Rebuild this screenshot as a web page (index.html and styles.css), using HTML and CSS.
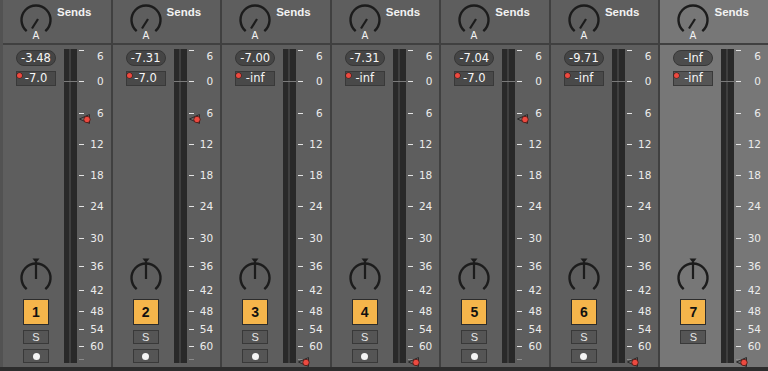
FILE: index.html
```html
<!DOCTYPE html>
<html lang="en">
<head>
    <meta charset="utf-8" />
    <title>Mixer</title>
    <link rel="stylesheet" href="styles.css">
</head>
<body>

    <svg class="defs" aria-hidden="true">
        <symbol id="send" viewBox="0 0 34 38">
            <path d="M7.7 28.1 A14.5 14.5 0 1 1 26.3 28.1" fill="none" stroke="#1c1c1c" stroke-width="2.4" />
            <line x1="19" y1="16" x2="13" y2="25.5" stroke="#1c1c1c" stroke-width="2.2" />
        </symbol>
        <symbol id="pan" viewBox="0 0 34 36">
            <polygon points="13.5,0.5 20.5,0.5 17,5" fill="#1c1c1c" />
            <path d="M7.7 31.1 A14.5 14.5 0 1 1 26.3 31.1" fill="none" stroke="#1c1c1c" stroke-width="2.4" />
            <line x1="17" y1="4" x2="17" y2="21" stroke="#1c1c1c" stroke-width="2.2" />
        </symbol>
        <symbol id="fader" viewBox="0 0 12 10">
            <polygon points="0.5,5 10.5,0.5 10.5,9.5" fill="#6e6e6e" stroke="#2a2a2a" stroke-width="1" />
            <circle cx="8" cy="5.5" r="3.2" fill="#ec4a40" stroke="#4a1410" stroke-width="0.8" />
        </symbol>
    </svg>

    <div class="mixer">

        <div class="strip">
            <div class="head">
                <svg class="knob" viewBox="0 0 34 38"><use href="#send" /><text x="17" y="35.5">A</text></svg>
                <span class="sends">Sends</span>
            </div>
            <div class="body">
                <div class="controls">
                    <div class="pill">-3.48</div>
                    <div class="vol"><span class="dot"></span>-7.0</div>
                    <svg class="pan" viewBox="0 0 34 36"><use href="#pan" /></svg>
                    <div class="num">1</div>
                    <div class="btn">S</div>
                    <div class="btn"><span class="mon"></span></div>
                </div>
                <div class="meter"><span class="bar"></span><span class="bar wide"></span><span class="zero"></span></div>
                <div class="scale">
                    <span class="mark top"><i></i>6</span>
                    <span class="mark d0"><i></i>0</span>
                    <span class="mark d6"><i></i>6</span>
                    <span class="mark d12"><i></i>12</span>
                    <span class="mark d18"><i></i>18</span>
                    <span class="mark d24"><i></i>24</span>
                    <span class="mark d30"><i></i>30</span>
                    <span class="mark d36"><i></i>36</span>
                    <span class="mark d42"><i></i>42</span>
                    <span class="mark d48"><i></i>48</span>
                    <span class="mark d54"><i></i>54</span>
                    <span class="mark d60"><i></i>60</span>
                    <span class="mark end"><i></i></span>
                    <svg class="fader at7" viewBox="0 0 12 10"><use href="#fader" /></svg>
                </div>
            </div>
        </div>

        <div class="strip">
            <div class="head">
                <svg class="knob" viewBox="0 0 34 38"><use href="#send" /><text x="17" y="35.5">A</text></svg>
                <span class="sends">Sends</span>
            </div>
            <div class="body">
                <div class="controls">
                    <div class="pill">-7.31</div>
                    <div class="vol"><span class="dot"></span>-7.0</div>
                    <svg class="pan" viewBox="0 0 34 36"><use href="#pan" /></svg>
                    <div class="num">2</div>
                    <div class="btn">S</div>
                    <div class="btn"><span class="mon"></span></div>
                </div>
                <div class="meter"><span class="bar"></span><span class="bar wide"></span><span class="zero"></span></div>
                <div class="scale">
                    <span class="mark top"><i></i>6</span>
                    <span class="mark d0"><i></i>0</span>
                    <span class="mark d6"><i></i>6</span>
                    <span class="mark d12"><i></i>12</span>
                    <span class="mark d18"><i></i>18</span>
                    <span class="mark d24"><i></i>24</span>
                    <span class="mark d30"><i></i>30</span>
                    <span class="mark d36"><i></i>36</span>
                    <span class="mark d42"><i></i>42</span>
                    <span class="mark d48"><i></i>48</span>
                    <span class="mark d54"><i></i>54</span>
                    <span class="mark d60"><i></i>60</span>
                    <span class="mark end"><i></i></span>
                    <svg class="fader at7" viewBox="0 0 12 10"><use href="#fader" /></svg>
                </div>
            </div>
        </div>

        <div class="strip">
            <div class="head">
                <svg class="knob" viewBox="0 0 34 38"><use href="#send" /><text x="17" y="35.5">A</text></svg>
                <span class="sends">Sends</span>
            </div>
            <div class="body">
                <div class="controls">
                    <div class="pill">-7.00</div>
                    <div class="vol"><span class="dot"></span>-inf</div>
                    <svg class="pan" viewBox="0 0 34 36"><use href="#pan" /></svg>
                    <div class="num">3</div>
                    <div class="btn">S</div>
                    <div class="btn"><span class="mon"></span></div>
                </div>
                <div class="meter"><span class="bar"></span><span class="bar wide"></span><span class="zero"></span></div>
                <div class="scale">
                    <span class="mark top"><i></i>6</span>
                    <span class="mark d0"><i></i>0</span>
                    <span class="mark d6"><i></i>6</span>
                    <span class="mark d12"><i></i>12</span>
                    <span class="mark d18"><i></i>18</span>
                    <span class="mark d24"><i></i>24</span>
                    <span class="mark d30"><i></i>30</span>
                    <span class="mark d36"><i></i>36</span>
                    <span class="mark d42"><i></i>42</span>
                    <span class="mark d48"><i></i>48</span>
                    <span class="mark d54"><i></i>54</span>
                    <span class="mark d60"><i></i>60</span>
                    <span class="mark end"><i></i></span>
                    <svg class="fader inf" viewBox="0 0 12 10"><use href="#fader" /></svg>
                </div>
            </div>
        </div>

        <div class="strip">
            <div class="head">
                <svg class="knob" viewBox="0 0 34 38"><use href="#send" /><text x="17" y="35.5">A</text></svg>
                <span class="sends">Sends</span>
            </div>
            <div class="body">
                <div class="controls">
                    <div class="pill">-7.31</div>
                    <div class="vol"><span class="dot"></span>-inf</div>
                    <svg class="pan" viewBox="0 0 34 36"><use href="#pan" /></svg>
                    <div class="num">4</div>
                    <div class="btn">S</div>
                    <div class="btn"><span class="mon"></span></div>
                </div>
                <div class="meter"><span class="bar"></span><span class="bar wide"></span><span class="zero"></span></div>
                <div class="scale">
                    <span class="mark top"><i></i>6</span>
                    <span class="mark d0"><i></i>0</span>
                    <span class="mark d6"><i></i>6</span>
                    <span class="mark d12"><i></i>12</span>
                    <span class="mark d18"><i></i>18</span>
                    <span class="mark d24"><i></i>24</span>
                    <span class="mark d30"><i></i>30</span>
                    <span class="mark d36"><i></i>36</span>
                    <span class="mark d42"><i></i>42</span>
                    <span class="mark d48"><i></i>48</span>
                    <span class="mark d54"><i></i>54</span>
                    <span class="mark d60"><i></i>60</span>
                    <span class="mark end"><i></i></span>
                    <svg class="fader inf" viewBox="0 0 12 10"><use href="#fader" /></svg>
                </div>
            </div>
        </div>

        <div class="strip">
            <div class="head">
                <svg class="knob" viewBox="0 0 34 38"><use href="#send" /><text x="17" y="35.5">A</text></svg>
                <span class="sends">Sends</span>
            </div>
            <div class="body">
                <div class="controls">
                    <div class="pill">-7.04</div>
                    <div class="vol"><span class="dot"></span>-7.0</div>
                    <svg class="pan" viewBox="0 0 34 36"><use href="#pan" /></svg>
                    <div class="num">5</div>
                    <div class="btn">S</div>
                    <div class="btn"><span class="mon"></span></div>
                </div>
                <div class="meter"><span class="bar"></span><span class="bar wide"></span><span class="zero"></span></div>
                <div class="scale">
                    <span class="mark top"><i></i>6</span>
                    <span class="mark d0"><i></i>0</span>
                    <span class="mark d6"><i></i>6</span>
                    <span class="mark d12"><i></i>12</span>
                    <span class="mark d18"><i></i>18</span>
                    <span class="mark d24"><i></i>24</span>
                    <span class="mark d30"><i></i>30</span>
                    <span class="mark d36"><i></i>36</span>
                    <span class="mark d42"><i></i>42</span>
                    <span class="mark d48"><i></i>48</span>
                    <span class="mark d54"><i></i>54</span>
                    <span class="mark d60"><i></i>60</span>
                    <span class="mark end"><i></i></span>
                    <svg class="fader at7" viewBox="0 0 12 10"><use href="#fader" /></svg>
                </div>
            </div>
        </div>

        <div class="strip">
            <div class="head">
                <svg class="knob" viewBox="0 0 34 38"><use href="#send" /><text x="17" y="35.5">A</text></svg>
                <span class="sends">Sends</span>
            </div>
            <div class="body">
                <div class="controls">
                    <div class="pill">-9.71</div>
                    <div class="vol"><span class="dot"></span>-inf</div>
                    <svg class="pan" viewBox="0 0 34 36"><use href="#pan" /></svg>
                    <div class="num">6</div>
                    <div class="btn">S</div>
                    <div class="btn"><span class="mon"></span></div>
                </div>
                <div class="meter"><span class="bar"></span><span class="bar wide"></span><span class="zero"></span></div>
                <div class="scale">
                    <span class="mark top"><i></i>6</span>
                    <span class="mark d0"><i></i>0</span>
                    <span class="mark d6"><i></i>6</span>
                    <span class="mark d12"><i></i>12</span>
                    <span class="mark d18"><i></i>18</span>
                    <span class="mark d24"><i></i>24</span>
                    <span class="mark d30"><i></i>30</span>
                    <span class="mark d36"><i></i>36</span>
                    <span class="mark d42"><i></i>42</span>
                    <span class="mark d48"><i></i>48</span>
                    <span class="mark d54"><i></i>54</span>
                    <span class="mark d60"><i></i>60</span>
                    <span class="mark end"><i></i></span>
                    <svg class="fader inf" viewBox="0 0 12 10"><use href="#fader" /></svg>
                </div>
            </div>
        </div>

        <div class="strip selected">
            <div class="head">
                <svg class="knob" viewBox="0 0 34 38"><use href="#send" /><text x="17" y="35.5">A</text></svg>
                <span class="sends">Sends</span>
            </div>
            <div class="body">
                <div class="controls">
                    <div class="pill">-Inf</div>
                    <div class="vol"><span class="dot"></span>-inf</div>
                    <svg class="pan" viewBox="0 0 34 36"><use href="#pan" /></svg>
                    <div class="num">7</div>
                    <div class="btn">S</div>
                </div>
                <div class="meter"><span class="bar"></span><span class="bar wide"></span><span class="zero"></span></div>
                <div class="scale">
                    <span class="mark top"><i></i>6</span>
                    <span class="mark d0"><i></i>0</span>
                    <span class="mark d6"><i></i>6</span>
                    <span class="mark d12"><i></i>12</span>
                    <span class="mark d18"><i></i>18</span>
                    <span class="mark d24"><i></i>24</span>
                    <span class="mark d30"><i></i>30</span>
                    <span class="mark d36"><i></i>36</span>
                    <span class="mark d42"><i></i>42</span>
                    <span class="mark d48"><i></i>48</span>
                    <span class="mark d54"><i></i>54</span>
                    <span class="mark d60"><i></i>60</span>
                    <span class="mark end"><i></i></span>
                    <svg class="fader inf" viewBox="0 0 12 10"><use href="#fader" /></svg>
                </div>
            </div>
        </div>

    </div>

</body>
</html>
```

FILE: styles.css
```css
body {
    margin: 0;
    background-color: #2d2d2d;
    font-family: "DejaVu Sans", sans-serif;
    color: #e8e8e8;
}

.defs {
    position: absolute;
    width: 0;
    height: 0;
}

.mixer {
    display: flex;
    gap: 2px;
    height: 367px;
    background-color: #404040;
    border-bottom: 4px solid #2d2d2d;
}

.strip {
    flex: 1;
    min-width: 0;
    display: flex;
    flex-direction: column;
    background-color: #5e5e5e;
}

    .strip:first-child {
        border-left: 3px solid #525252;
    }

.selected {
    background-color: #777777;
}

.head {
    height: 43px;
    display: flex;
    align-items: flex-start;
    padding-left: 16px;
    border-bottom: 2px solid #404040;
}

.knob {
    width: 34px;
    height: 38px;
    margin-top: 3px;
}

    .knob text {
        font-family: "DejaVu Sans", sans-serif;
        font-size: 10px;
        fill: #f4f4f4;
        text-anchor: middle;
    }

.sends {
    margin-top: 5px;
    margin-left: 4px;
    font-family: "Liberation Sans", sans-serif;
    font-weight: bold;
    font-size: 11.5px;
    line-height: 14px;
    color: #f2f2f2;
}

.body {
    flex: 1;
    display: flex;
    align-items: flex-start;
}

.controls {
    width: 61px;
    padding-left: 5px;
    box-sizing: border-box;
    display: flex;
    flex-direction: column;
    align-items: center;
}

.pill {
    margin-top: 5px;
    width: 40px;
    height: 16px;
    box-sizing: border-box;
    border: 1px solid #363636;
    border-radius: 8px;
    background-color: #454545;
    font-size: 11.5px;
    line-height: 14px;
    text-align: center;
    color: #f6f6f6;
}

.vol {
    position: relative;
    margin-top: 5px;
    width: 40px;
    height: 15px;
    box-sizing: border-box;
    border: 1px solid #393939;
    background-color: #494949;
    font-size: 11.5px;
    line-height: 13px;
    text-align: center;
    color: #f6f6f6;
}

.selected .pill {
    background-color: #4c4c4c;
}

.selected .vol {
    background-color: #555555;
}

.dot {
    position: absolute;
    left: 0;
    top: 1px;
    width: 5px;
    height: 5px;
    border-radius: 50%;
    background-color: #ec4a40;
    box-shadow: 0 0 0 0.5px #4a1410;
}

.pan {
    margin-top: 172px;
    width: 34px;
    height: 36px;
}

.num {
    margin-top: 5px;
    width: 26px;
    height: 26px;
    box-sizing: border-box;
    border: 1px solid #2c2c2c;
    background-color: #f5b54b;
    font-family: "Liberation Sans", sans-serif;
    font-weight: bold;
    font-size: 14px;
    line-height: 24px;
    text-align: center;
    color: #111;
}

.btn {
    margin-top: 5px;
    width: 26px;
    height: 14px;
    box-sizing: border-box;
    border: 1px solid #393939;
    background-color: #555555;
    font-family: "Liberation Sans", sans-serif;
    font-size: 11px;
    line-height: 12px;
    text-align: center;
    color: #e6e6e6;
    display: flex;
    align-items: center;
    justify-content: center;
}

.mon {
    width: 7px;
    height: 7px;
    border-radius: 50%;
    background-color: #f4f4f4;
}

.meter {
    position: relative;
    margin-top: 4px;
    width: 13px;
    height: 314px;
    display: flex;
    gap: 2px;
    background-color: #3f3f3f;
}

.bar {
    width: 5px;
    background-color: #292929;
}

    .bar.wide {
        width: 6px;
    }

.zero {
    position: absolute;
    left: 0;
    right: 0;
    top: 32px;
    height: 1px;
    background-color: #7a7a7a;
}

.scale {
    position: relative;
    flex: 1;
    margin-top: 4px;
    height: 314px;
}

.mark {
    position: absolute;
    left: 2px;
    right: 7px;
    height: 12px;
    display: flex;
    align-items: center;
    justify-content: space-between;
    font-size: 10.5px;
    line-height: 12px;
    color: #ececec;
}

    .mark i {
        width: 5px;
        height: 1px;
        background-color: #e4e4e4;
    }

    .mark.top {
        top: 1px;
    }

        .mark.top i {
            align-self: flex-start;
        }

.d0 { top: 26px; }
.d6 { top: 58px; }
.d12 { top: 89px; }
.d18 { top: 120px; }
.d24 { top: 151px; }
.d30 { top: 183px; }
.d36 { top: 211px; }
.d42 { top: 235px; }
.d48 { top: 256px; }
.d54 { top: 274px; }
.d60 { top: 291px; }
.end { top: 304px; }

    .mark.end i {
        background-color: #8c8c8c;
    }

.fader {
    position: absolute;
    left: 2px;
    width: 12px;
    height: 10px;
}

.at7 {
    top: 65px;
}

.inf {
    top: 308px;
}
```
